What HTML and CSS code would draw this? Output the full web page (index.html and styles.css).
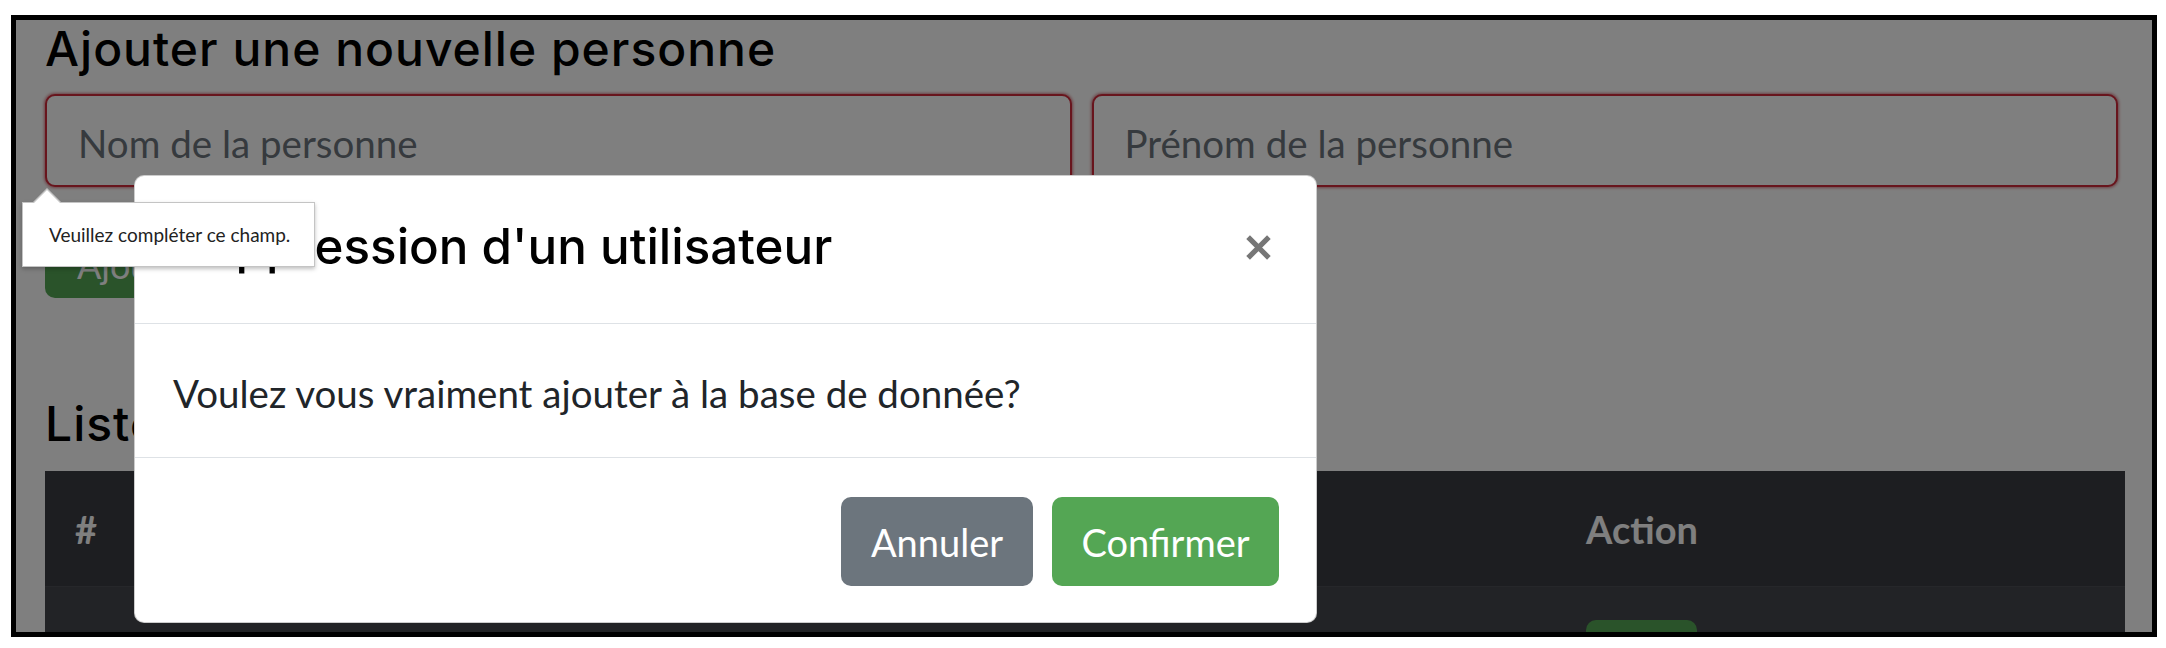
FILE: index.html
```html
<!DOCTYPE html>
<html lang="fr">
<head>
<meta charset="utf-8">
<title>Personnes</title>
<link rel="stylesheet" href="styles.css">
</head>
<body>
<div class="frame">
  <div class="page">
    <h3 class="page-title">Ajouter une nouvelle personne</h3>
    <form class="person-form">
      <div class="field-row">
        <input class="field is-invalid" type="text" placeholder="Nom de la personne">
        <input class="field is-invalid" type="text" placeholder="Prénom de la personne">
      </div>
      <button class="btn btn-add" type="button">Ajouter</button>
    </form>
    <h3 class="page-title list-title">Liste des personnes</h3>
    <table class="people">
      <thead>
        <tr><th class="c-id">#</th><th class="c-nom">Nom</th><th class="c-prenom">Prénom</th><th class="c-action">Action</th></tr>
      </thead>
      <tbody>
        <tr><td></td><td></td><td></td><td class="cell-action"><button class="btn btn-del" type="button" aria-label="Supprimer"></button></td></tr>
      </tbody>
    </table>
  </div>
  <div class="backdrop"></div>
  <div class="modal">
    <div class="modal-header">
      <h5 class="modal-title">Suppression d'un utilisateur</h5>
      <button class="close" type="button" aria-label="Fermer">
        <svg class="close-icon" viewBox="0 0 26 26" width="26" height="26"><path d="M3 3L23 23M23 3L3 23" stroke="currentColor" stroke-width="5" fill="none"/></svg>
      </button>
    </div>
    <div class="modal-body">Voulez vous vraiment ajouter à la base de donnée?</div>
    <div class="modal-footer">
      <button class="btn btn-cancel" type="button">Annuler</button>
      <button class="btn btn-confirm" type="button">Confirmer</button>
    </div>
  </div>
  <div class="tooltip">Veuillez compléter ce champ.</div>
</div>
</body>
</html>
```
FILE: styles.css
```css
body {
  margin: 0;
  background: #fff;
}

.frame {
  position: relative;
  margin: 15px 9px 0 11px;
  height: 612px;
  border: 5px solid #000;
  overflow: hidden;
  background: #fff;
}

.page {
  padding: 0 27px 0 29px;
}

.page-title {
  margin: 0;
  font-family: "Inter", sans-serif;
  font-weight: 500;
  font-size: 48px;
  letter-spacing: 1px;
  line-height: 57px;
  color: #000;
}

.field-row {
  display: flex;
  gap: 20px;
  margin: 17px 7px 0 0;
}

.field {
  flex: 1;
  min-width: 0;
  height: 93px;
  box-sizing: border-box;
  padding: 4px 31px 0;
  border: 2px solid #d02a3a;
  border-radius: 10px;
  box-shadow: 0 0 3px 1px rgba(190, 30, 45, 0.55);
  background: #fff;
  font-family: "Lato", sans-serif;
  font-size: 38.5px;
  color: #212529;
  outline: none;
}

.field::placeholder {
  color: #6c757d;
}

.btn {
  border: 0;
  border-radius: 10px;
  color: #fff;
  font-family: "Lato", sans-serif;
  padding: 0;
}

.btn-add {
  display: block;
  margin-top: 45px;
  height: 66px;
  padding: 0 32px;
  font-size: 36px;
  background: #54a654;
}

.list-title {
  margin-top: 97px;
}

.people {
  width: 100%;
  margin-top: 19px;
  border-collapse: collapse;
  font-family: "Lato", sans-serif;
  font-size: 36px;
  color: #fff;
}

.people th {
  height: 115px;
  padding: 0 30px;
  text-align: left;
  font-weight: 700;
  font-size: 38px;
  background: #3b3d43;
}

.people .c-id { width: 195px; }
.people .c-nom { width: 560px; }
.people .c-action { width: 509px; }

.people td {
  height: 110px;
  padding: 33px 30px 0;
  vertical-align: top;
  background: #45474d;
  border-top: 1px solid #4c4f55;
}

.btn-del {
  display: block;
  width: 111px;
  height: 60px;
  background: #54a654;
}

.backdrop {
  position: absolute;
  inset: 0;
  background: rgba(0, 0, 0, 0.5);
}

.modal {
  position: absolute;
  left: 118px;
  top: 155px;
  width: 1183px;
  height: 448px;
  box-sizing: border-box;
  display: flex;
  flex-direction: column;
  background: #fff;
  border: 1px solid rgba(0, 0, 0, 0.2);
  border-radius: 10px;
  font-family: "Lato", sans-serif;
  color: #212529;
}

.modal-header {
  height: 148px;
  box-sizing: border-box;
  display: flex;
  align-items: center;
  justify-content: space-between;
  padding: 0 44px 5px 39px;
  border-bottom: 1px solid #dee2e6;
}

.modal-title {
  margin: 0;
  font-family: "Inter", sans-serif;
  font-weight: 500;
  font-size: 49.3px;
  line-height: 1.2;
  color: #000;
}

.close {
  display: flex;
  padding: 0;
  border: 0;
  background: none;
  color: #767676;
}

.close-icon {
  display: block;
  width: 27px;
  height: 27px;
}

.modal-body {
  height: 134px;
  box-sizing: border-box;
  display: flex;
  align-items: center;
  padding: 5px 38px 0;
  border-bottom: 1px solid #dee2e6;
  font-size: 38.5px;
}

.modal-footer {
  flex: 1;
  display: flex;
  align-items: center;
  justify-content: flex-end;
  gap: 19px;
  padding: 3px 37px 0 0;
}

.btn-cancel,
.btn-confirm {
  height: 89px;
  font-size: 38px;
}

.btn-cancel {
  width: 192px;
  background: #6c757d;
}

.btn-confirm {
  width: 227px;
  background: #54a654;
}

.tooltip {
  position: absolute;
  left: 6px;
  top: 182px;
  width: 293px;
  height: 65px;
  box-sizing: border-box;
  display: flex;
  align-items: center;
  padding-left: 26px;
  background: #fff;
  border: 1px solid #c4c4c4;
  box-shadow: 0 2px 4px rgba(0, 0, 0, 0.25);
  font-family: "Lato", sans-serif;
  font-size: 19px;
  white-space: nowrap;
  color: #222;
}

.tooltip::before,
.tooltip::after {
  content: "";
  position: absolute;
  width: 0;
  height: 0;
  border-style: solid;
  border-color: transparent;
}

.tooltip::after {
  left: 9px;
  top: -15px;
  border-width: 0 15px 15px 15px;
  border-bottom-color: #c4c4c4;
}

.tooltip::before {
  left: 10px;
  top: -13px;
  border-width: 0 14px 14px 14px;
  border-bottom-color: #fff;
  z-index: 1;
}
```
